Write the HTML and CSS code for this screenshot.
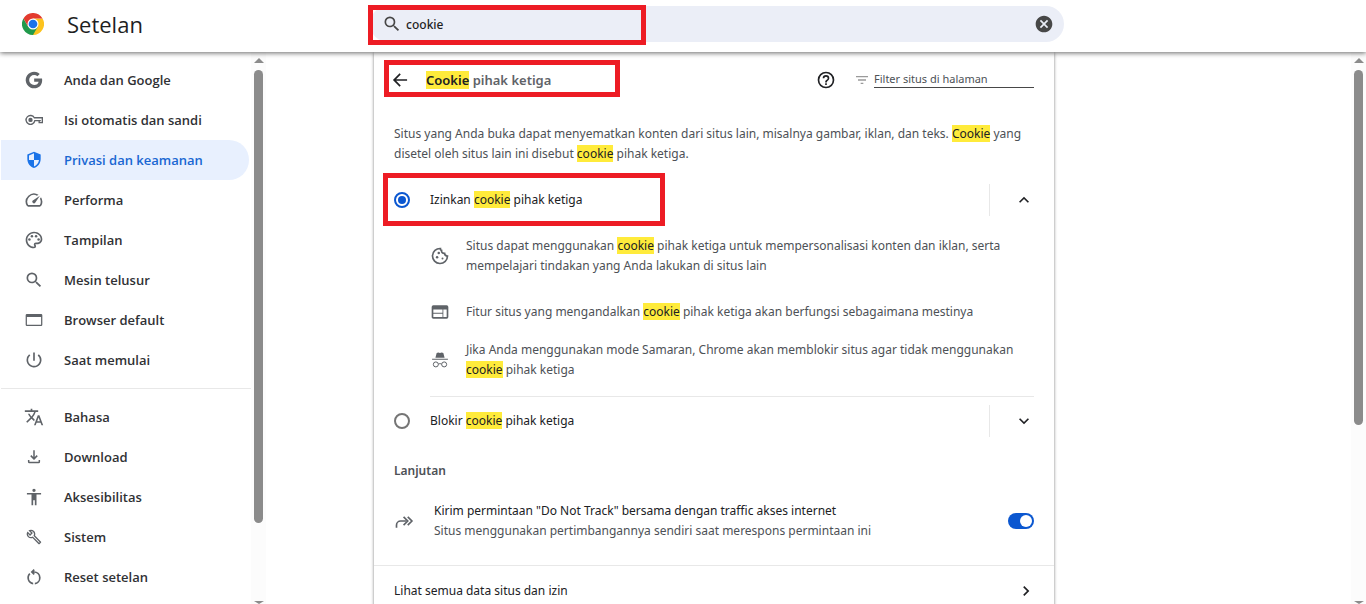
FILE: index.html
```html
<!DOCTYPE html>
<html lang="id">
<head>
  <meta charset="UTF-8">
  <meta name="viewport" content="width=device-width, initial-scale=1.0">
  <title>Setelan - Cookie pihak ketiga</title>
  <link rel="stylesheet" href="styles.css">
</head>
<body>

  <header class="toolbar">
    <div class="brand">
      <svg class="logo" viewBox="0 0 48 48" aria-hidden="true">
        <path fill="#fcc31e" d="M24 24V12H44.8A24 24 0 0 1 24 48Z"/>
        <path fill="#219a4b" d="M3.2 12A24 24 0 0 0 24 48L34.4 30 24 24 13.6 30Z"/>
        <path fill="#e33b2e" d="M3.2 12 13.6 30 24 12H44.8A24 24 0 0 0 3.2 12Z"/>
        <circle cx="24" cy="24" r="12" fill="#fff"/>
        <circle cx="24" cy="24" r="9.5" fill="#1a73e8"/>
      </svg>
      <h1>Setelan</h1>
    </div>
    <div class="search">
      <svg class="icon" viewBox="0 0 24 24" aria-hidden="true"><path d="M15.5 14h-.79l-.28-.27A6.47 6.47 0 0 0 16 9.5 6.5 6.5 0 1 0 9.5 16c1.61 0 3.09-.59 4.23-1.57l.27.28v.79l5 4.99L20.49 19l-4.99-5zm-6 0C7.01 14 5 11.99 5 9.5S7.01 5 9.5 5 14 7.01 14 9.5 11.99 14 9.5 14z"/></svg>
      <input type="text" value="cookie" aria-label="Telusuri setelan">
      <button class="clear" aria-label="Hapus penelusuran">
        <svg class="icon" viewBox="0 0 24 24"><path d="M12 2C6.47 2 2 6.47 2 12s4.47 10 10 10 10-4.47 10-10S17.53 2 12 2zm5 13.59L15.59 17 12 13.41 8.41 17 7 15.59 10.59 12 7 8.41 8.41 7 12 10.59 15.59 7 17 8.41 13.41 12 17 15.59z"/></svg>
      </button>
      <span class="highlight highlight-search"></span>
    </div>
  </header>

  <div class="container">
    <nav class="sidebar">
      <div class="menu">
        <a href="#"><svg class="icon" viewBox="0 0 24 24"><path d="M12.200 10.200v3.800h5.400c-.5 2.400-2.500 4-5.400 4a6 6 0 1 1 0-12c1.500 0 2.800.5 3.900 1.500l2.800-2.800A10 10 0 1 0 12.200 22c5.600 0 9.600-4 9.600-9.800 0-.7-.1-1.400-.2-2z"/></svg>Anda dan Google</a>
        <a href="#"><svg class="icon" viewBox="0 0 24 24"><path fill="none" stroke="currentColor" stroke-width="1.6" d="M12.400 9.300H22v5.900h-3.800v-2.500h-5.200A5.300 5.300 0 1 1 12.400 9.300zM18.200 12.700h2"/><circle cx="7.800" cy="11.900" r="2.600"/></svg>Isi otomatis dan sandi</a>
        <a href="#" class="active"><svg class="icon" viewBox="0 0 24 24"><path d="M12 2 4 5.500v5.300c0 5 3.400 9.600 8 10.900 4.600-1.300 8-5.900 8-10.900V5.500L12 2zm0 10h6c-.5 3.600-2.900 6.700-6 7.700V12H6V6.700L12 4z"/></svg>Privasi dan keamanan</a>
        <a href="#"><svg class="icon" viewBox="0 0 24 24"><path d="m20.380 8.570-1.230 1.850a8 8 0 0 1-.22 7.580H5.070A8 8 0 0 1 15.580 6.850l1.850-1.230A10 10 0 0 0 3.350 19a2 2 0 0 0 1.720 1h13.850a2 2 0 0 0 1.740-1 10 10 0 0 0-.27-10.440zm-9.790 6.840a2 2 0 0 0 2.830 0l5.660-8.490-8.490 5.660a2 2 0 0 0 0 2.830z"/></svg>Performa</a>
        <a href="#"><svg class="icon" viewBox="0 0 24 24"><path d="M12 22C6.490 22 2 17.510 2 12S6.490 2 12 2s10 4.040 10 9c0 3.310-2.690 6-6 6h-1.770c-.28 0-.5.220-.5.500 0 .12.050.23.130.33.41.47.64 1.060.64 1.670A2.500 2.500 0 0 1 12 22zm0-18c-4.410 0-8 3.590-8 8s3.590 8 8 8c.28 0 .5-.22.5-.5a.54.54 0 0 0-.14-.35c-.41-.46-.63-1.050-.63-1.650a2.500 2.500 0 0 1 2.500-2.500H16c2.210 0 4-1.790 4-4 0-3.860-3.590-7-8-7z"/><circle cx="6.500" cy="11.500" r="1.500"/><circle cx="9.500" cy="7.500" r="1.500"/><circle cx="14.500" cy="7.500" r="1.500"/><circle cx="17.500" cy="11.500" r="1.500"/></svg>Tampilan</a>
        <a href="#"><svg class="icon" viewBox="0 0 24 24"><path d="M15.500 14h-.79l-.28-.27A6.470 6.470 0 0 0 16 9.500 6.500 6.500 0 1 0 9.500 16c1.610 0 3.090-.59 4.230-1.570l.27.28v.79l5 4.990L20.490 19l-4.990-5zm-6 0C7.010 14 5 11.990 5 9.500S7.010 5 9.500 5 14 7.010 14 9.500 11.990 14 9.500 14z"/></svg>Mesin telusur</a>
        <a href="#"><svg class="icon" viewBox="0 0 24 24"><path d="M20.500 4.800h-17A1.500 1.500 0 0 0 2 6.300v11.400a1.500 1.500 0 0 0 1.500 1.500h17a1.500 1.500 0 0 0 1.500-1.500V6.300a1.500 1.500 0 0 0-1.500-1.500zm0 12.900h-17V8.400h17v9.300z"/></svg>Browser default</a>
        <a href="#"><svg class="icon" viewBox="0 0 24 24"><path d="M13 3h-2v10h2V3zm4.830 2.170-1.420 1.420A6.920 6.920 0 0 1 19 12a7 7 0 1 1-11.420-5.420L6.170 5.170A8.930 8.930 0 0 0 3 12a9 9 0 1 0 14.830-6.830z"/></svg>Saat memulai</a>
        <hr>
        <a href="#"><svg class="icon" viewBox="0 0 24 24"><path d="m12.870 15.070-2.540-2.510.03-.03A17.520 17.520 0 0 0 14.070 6H17V4h-7V2H8v2H1v1.990h11.170C11.500 7.920 10.440 9.750 9 11.350 8.070 10.320 7.300 9.190 6.690 8h-2c.73 1.630 1.730 3.170 2.980 4.560l-5.090 5.020L4 19l5-5 3.110 3.110.76-2.040zM18.500 10h-2L12 22h2l1.120-3h4.750L21 22h2l-4.500-12zm-2.620 7 1.620-4.330L19.120 17h-3.240z"/></svg>Bahasa</a>
        <a href="#"><svg class="icon" viewBox="0 0 24 24"><path d="m12 15.500-4.500-4.500 1.300-1.300 2.300 2.300V4h1.800v8l2.300-2.300 1.300 1.300-4.500 4.500zM6.500 19.500a1.800 1.800 0 0 1-1.800-1.800V15.500h1.800v2.200h11v-2.200h1.800v2.200a1.800 1.800 0 0 1-1.800 1.800h-11z"/></svg>Download</a>
        <a href="#"><svg class="icon" viewBox="0 0 24 24"><path d="M12 2a2 2 0 1 1 0 4 2 2 0 0 1 0-4zm8.500 7H15v13h-2v-6h-2v6H9V9H3.500V7.200h17V9z"/></svg>Aksesibilitas</a>
        <a href="#"><svg class="icon" viewBox="-3 -3 30 30"><path d="m22.610 18.990-9.080-9.080c.93-2.340.45-5.100-1.440-7C9.790.61 6.210.4 3.660 2.260L7.500 6.110 6.080 7.520 2.250 3.690C.39 6.230.6 9.820 2.900 12.110c1.860 1.860 4.570 2.350 6.890 1.480l9.110 9.110c.39.39 1.020.39 1.410 0l2.300-2.300c.4-.38.4-1.010 0-1.410zm-3 1.600-9.460-9.460c-.61.45-1.290.72-2 .82-1.360.2-2.790-.21-3.830-1.250C3.370 9.760 2.930 8.500 3 7.260l3.090 3.090 4.240-4.240-3.090-3.090c1.240-.07 2.490.37 3.440 1.310a4.470 4.470 0 0 1 1.240 3.960 4.350 4.350 0 0 1-.88 1.960l9.450 9.450-.88.890z"/></svg>Sistem</a>
        <a href="#"><svg class="icon" viewBox="0 0 24 24"><path d="M6 13c0-1.650.67-3.150 1.760-4.240L6.340 7.340A8 8 0 0 0 11 20.930v-2.020A6 6 0 0 1 6 13zm14 0a8 8 0 0 0-8-8h-.11l1.110-1.110-1.410-1.420L8 6.060l3.590 3.590L13 8.230 11.780 7H12a6 6 0 0 1 1 11.910v2.020A8 8 0 0 0 20 13z"/></svg>Reset setelan</a>
      </div>
      <div class="scrollbar">
        <span class="arrow-up"></span>
        <span class="thumb"></span>
        <span class="arrow-down"></span>
      </div>
    </nav>

    <main class="main">
      <section class="card">
        <div class="card-header">
          <button class="back" aria-label="Kembali"><svg class="icon" viewBox="0 0 24 24"><path d="M20.500 11H7.330l5.590-5.590L11.500 4l-8 8 8 8 1.410-1.410L7.330 13H20.500v-2z"/></svg></button>
          <h2><mark>Cookie</mark> pihak ketiga</h2>
          <button class="help" aria-label="Bantuan"><svg class="icon" viewBox="0 0 24 24"><path d="M11 18h2v-2h-2v2zm1-16a10 10 0 1 0 0 20 10 10 0 0 0 0-20zm0 18a8 8 0 1 1 0-16 8 8 0 0 1 0 16zm0-14a4 4 0 0 0-4 4h2a2 2 0 1 1 4 0c0 2-3 1.750-3 5h2c0-2.250 3-2.500 3-5a4 4 0 0 0-4-4z"/></svg></button>
          <label class="filter">
            <svg class="icon" viewBox="0 0 24 24" aria-hidden="true"><path d="M10 18h4v-2h-4v2zM3 6v2h18V6H3zm3 7h12v-2H6v2z"/></svg>
            <input type="text" placeholder="Filter situs di halaman" aria-label="Filter situs di halaman">
          </label>
          <span class="highlight highlight-title"></span>
        </div>

        <p class="intro">Situs yang Anda buka dapat menyematkan konten dari situs lain, misalnya gambar, iklan, dan teks. <mark>Cookie</mark> yang disetel oleh situs lain ini disebut <mark>cookie</mark> pihak ketiga.</p>

        <div class="option">
          <input type="radio" name="cookie" id="izinkan" checked>
          <label for="izinkan">Izinkan <mark>cookie</mark> pihak ketiga</label>
          <button class="expand" aria-label="Ciutkan"><svg class="icon" viewBox="0 0 24 24"><path d="m12 8-6 6 1.410 1.410L12 10.830l4.590 4.580L18 14z"/></svg></button>
          <span class="highlight highlight-option"></span>
        </div>

        <ul class="details">
          <li>
            <svg class="icon" viewBox="0 0 24 24"><path fill="none" stroke="currentColor" stroke-width="2" d="M12.500 3A9 9 0 1 0 21 12c-2 0-3.500-1.200-3.500-3.200-2.500.2-4-1.300-3.600-3.500-1.100-.3-1.600-1.200-1.400-2.300z"/><circle cx="10.500" cy="8.500" r="1.500"/><circle cx="8.500" cy="13.500" r="1.500"/><circle cx="15" cy="15" r="1.200"/></svg>
            <span>Situs dapat menggunakan <mark>cookie</mark> pihak ketiga untuk mempersonalisasi konten dan iklan, serta mempelajari tindakan yang Anda lakukan di situs lain</span>
          </li>
          <li class="single">
            <svg class="icon" viewBox="0 0 24 24"><path d="M20 4H4a2 2 0 0 0-2 2v12c0 1.100.9 2 2 2h16a2 2 0 0 0 2-2V6a2 2 0 0 0-2-2zm-5 14H4v-4h11v4zm0-5H4V9h11v4zm5 5h-4V9h4v9z"/></svg>
            <span>Fitur situs yang mengandalkan <mark>cookie</mark> pihak ketiga akan berfungsi sebagaimana mestinya</span>
          </li>
          <li>
            <svg class="icon" viewBox="0 0 24 24"><path d="m16 3.500-2-.6-2 .6-2-.6-2 .6-1.500 5.700h11zM2.500 10.600h19v1.200h-19z"/><g fill="none" stroke="currentColor" stroke-width="1.200"><circle cx="7" cy="17.300" r="3"/><circle cx="17" cy="17.300" r="3"/><path d="M10 17c1.200-.8 2.800-.8 4 0"/></g></svg>
            <span>Jika Anda menggunakan mode Samaran, Chrome akan memblokir situs agar tidak menggunakan <mark>cookie</mark> pihak ketiga</span>
          </li>
        </ul>

        <div class="option">
          <input type="radio" name="cookie" id="blokir">
          <label for="blokir">Blokir <mark>cookie</mark> pihak ketiga</label>
          <button class="expand" aria-label="Luaskan"><svg class="icon" viewBox="0 0 24 24"><path d="M16.590 8.590 12 13.170 7.410 8.590 6 10l6 6 6-6z"/></svg></button>
        </div>

        <h3>Lanjutan</h3>

        <div class="toggle-row">
          <svg class="icon" viewBox="0 0 24 24"><g fill="none" stroke="currentColor" stroke-width="2"><path d="M3 20v-3a5 5 0 0 1 5-5h7"/><path d="m11.500 7 5 5-5 5M16.500 7l5 5-5 5"/></g></svg>
          <label for="dnt">Kirim permintaan "Do Not Track" bersama dengan traffic akses internet
            <small>Situs menggunakan pertimbangannya sendiri saat merespons permintaan ini</small>
          </label>
          <input type="checkbox" class="toggle" id="dnt" checked>
        </div>

        <a href="#" class="link-row">Lihat semua data situs dan izin
          <svg class="icon" viewBox="0 0 24 24"><path d="M10 6 8.590 7.410 13.170 12l-4.580 4.590L10 18l6-6z"/></svg>
        </a>
      </section>
    </main>

    <div class="scrollbar page-scrollbar">
      <span class="arrow-up"></span>
      <span class="thumb"></span>
      <span class="arrow-down"></span>
    </div>
  </div>

</body>
</html>
```
FILE: styles.css
```css
* {
  box-sizing: border-box;
}
body {
  margin: 0;
  height: 100vh;
  display: flex;
  flex-direction: column;
  overflow: hidden;
  font-family: "Noto Sans", "Open Sans", sans-serif;
  font-size: 12px;
  line-height: 20px;
  color: #1f1f1f;
  background-color: #fff;
}
h1, h2, h3, p, ul {
  margin: 0;
  padding: 0;
  font-weight: normal;
}
button {
  display: flex;
  align-items: center;
  justify-content: center;
  padding: 0;
  border: none;
  background: none;
  color: inherit;
  cursor: pointer;
}
input {
  margin: 0;
  font: inherit;
  color: inherit;
}
a {
  color: inherit;
  text-decoration: none;
}
mark {
  background-color: #ffeb3b;
  color: #202124;
}
.icon {
  width: 20px;
  height: 20px;
  flex-shrink: 0;
  fill: currentColor;
}

/* red marker boxes */
.highlight {
  position: absolute;
  border: 5px solid #ed1c24;
  pointer-events: none;
}
.highlight-search {
  top: -1px;
  left: -2px;
  width: 278px;
  height: 40px;
}
.highlight-title {
  top: 8px;
  left: 10px;
  width: 236px;
  height: 37px;
}
.highlight-option {
  top: -3px;
  left: -11px;
  width: 282px;
  height: 53px;
}

/* toolbar */
.toolbar {
  position: relative;
  z-index: 1;
  flex-shrink: 0;
  display: grid;
  grid-template-columns: 266px 10fr minmax(0, 694px) 29fr;
  height: 52px;
  padding: 6px 0 10px;
  background-color: #fff;
  box-shadow: 0 1px 5px rgba(0, 0, 0, 0.6);
}
.brand {
  display: flex;
  align-items: center;
  gap: 23px;
  padding-left: 22px;
}
.logo {
  width: 22px;
  height: 22px;
}
.brand h1 {
  font-family: "Open Sans", "Noto Sans", sans-serif;
  font-size: 22px;
  font-weight: 500;
}
.search {
  position: relative;
  grid-column: 3;
  display: flex;
  align-items: center;
  gap: 4px;
  padding: 0 10px 0 12px;
  border-radius: 18px;
  background-color: #ebeef7;
}
.search .icon {
  color: #474747;
}
.search input {
  flex: 1;
  min-width: 0;
  padding: 2px 0 0;
  border: none;
  outline: none;
  background: none;
  font-weight: 500;
}

/* sidebar */
.container {
  flex: 1;
  min-height: 0;
  display: flex;
}
.sidebar {
  display: flex;
  width: 266px;
  flex-shrink: 0;
}
.menu {
  flex: 1;
  padding: 8px 0 0 1px;
}
.menu a {
  display: flex;
  align-items: center;
  gap: 20px;
  height: 40px;
  margin-right: 2px;
  padding-left: 23px;
  border-radius: 0 20px 20px 0;
  font-family: "Open Sans", "Noto Sans", sans-serif;
  font-size: 13px;
  font-weight: 600;
  color: #303134;
}
.menu .icon {
  color: #5f6368;
}
.menu a.active {
  background-color: #e8f0fe;
  color: #1967d2;
}
.menu a.active .icon {
  color: #1a73e8;
}
.menu hr {
  height: 1px;
  margin: 8px 0;
  border: none;
  background-color: #e8e8e8;
}

/* scrollbars */
.scrollbar {
  width: 15px;
  flex-shrink: 0;
  display: flex;
  flex-direction: column;
  align-items: center;
  padding-top: 6px;
  background-color: #fcfcfc;
}
.arrow-up, .arrow-down {
  border: 5px solid transparent;
}
.arrow-up {
  border-top: none;
  border-bottom-color: #8b8b8b;
}
.arrow-down {
  margin-top: auto;
  border-bottom: none;
  border-top: 3px solid #8b8b8b;
}
.thumb {
  width: 9px;
  height: 83%;
  margin-top: 7px;
  border-radius: 5px;
  background-color: #8b8b8b;
}
.page-scrollbar .thumb {
  height: 65%;
}

/* content */
.main {
  flex: 1;
  min-width: 0;
  display: grid;
  grid-template-columns: 4fr minmax(0, 680px) 11fr;
}
.card {
  grid-column: 2;
  padding: 0 20px;
  box-shadow: 0 1px 3px rgba(0, 0, 0, 0.5);
  color: #202124;
}
.card-header {
  position: relative;
  display: flex;
  align-items: center;
  height: 56px;
  margin: 0 -20px;
  padding: 0 20px 0 16px;
}
.card-header h2 {
  flex: 1;
  margin-left: 16px;
  font-size: 13px;
  font-weight: 600;
  color: #5f6368;
}
.filter {
  display: flex;
  align-items: center;
  gap: 4px;
  margin-left: 18px;
}
.filter .icon {
  width: 16px;
  height: 16px;
  color: #9a9a9a;
}
.filter input {
  width: 160px;
  height: 16px;
  padding: 0 0 2px;
  border: none;
  border-bottom: 1px solid #474747;
  outline: none;
  background: none;
  font-size: 11px;
}
.filter input::placeholder {
  color: #4d5156;
  opacity: 1;
}
.intro {
  padding: 16px 0 12px;
  color: #4d5156;
}
.option {
  position: relative;
  display: flex;
  align-items: center;
  height: 48px;
}
.option label {
  flex: 1;
  margin-left: 20px;
}
.option input {
  appearance: none;
  display: grid;
  place-items: center;
  width: 16px;
  height: 16px;
  border: 2px solid #757575;
  border-radius: 50%;
}
.option input:checked {
  border-color: #0b57d0;
}
.option input:checked::before {
  content: "";
  width: 8px;
  height: 8px;
  border-radius: 50%;
  background-color: #0b57d0;
}
.expand {
  height: 32px;
  padding-left: 24px;
  border-left: 1px solid #e8e8e8;
}
.details {
  display: grid;
  gap: 18px;
  margin-left: 36px;
  padding: 12px 0 16px;
  border-bottom: 1px solid #e8e8e8;
  list-style: none;
  color: #4d5156;
}
.details li {
  display: flex;
  align-items: center;
  gap: 16px;
}
.details .single {
  padding-top: 8px;
}
.details .icon {
  color: #5f6368;
}
h3 {
  padding: 16px 0;
  font-size: 12px;
  font-weight: 600;
  color: #4d5156;
}
.toggle-row {
  display: flex;
  align-items: center;
  gap: 20px;
  padding: 4px 0 24px;
}
.toggle-row .icon {
  color: #5f6368;
}
.toggle-row label {
  flex: 1;
}
.toggle-row small {
  display: block;
  font-size: 12px;
  color: #4d5156;
}
.toggle {
  appearance: none;
  display: flex;
  justify-content: flex-end;
  width: 26px;
  height: 16px;
  padding: 2px;
  border-radius: 8px;
  background-color: #0b57d0;
}
.toggle::before {
  content: "";
  width: 12px;
  height: 12px;
  border-radius: 50%;
  background-color: #fff;
}
.toggle:not(:checked) {
  justify-content: flex-start;
  background-color: #9aa0a6;
}
.link-row {
  display: flex;
  align-items: center;
  justify-content: space-between;
  height: 50px;
  margin: 0 -20px;
  padding: 0 18px 0 20px;
  border-top: 1px solid #e8e8e8;
}
```
